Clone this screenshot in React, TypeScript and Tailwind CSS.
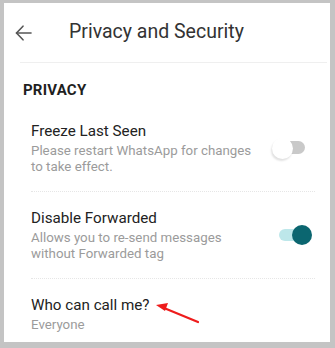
import React from 'react';

function Toggle({ on }: { on: boolean }) {
  return (
    <div className="relative w-[40px] h-[20px] shrink-0">
      {on ? (
        <>
          <div className="absolute left-[7px] top-[4px] w-[28px] h-[12px] rounded-full bg-[#bde7ea]" />
          <div className="absolute right-0 top-0 w-[20px] h-[20px] rounded-full bg-[#0b6670]" />
        </>
      ) : (
        <>
          <div className="absolute left-[6px] top-[3px] w-[27px] h-[13px] rounded-full bg-[#c9c9c9]" />
          <div className="absolute left-0 top-0 w-[21px] h-[21px] rounded-full bg-white shadow-[-1px_2px_2px_rgba(0,0,0,0.12)]" />
        </>
      )}
    </div>
  );
}

function Row({
  title,
  sub,
  toggle,
  divider = true,
}: {
  title: string;
  sub: string;
  toggle?: boolean;
  divider?: boolean;
}) {
  return (
    <div className={`ml-[27px] mr-[15px] flex items-center pt-[16px] pb-[16px] ${divider ? 'border-b border-dotted border-[#e6e6e6]' : ''}`}>
      <div className="w-[232px]">
        <div className="text-[15.2px] leading-[20px] text-[#222]">{title}</div>
        <div className="mt-[2px] text-[13.3px] leading-[16px] text-[#9b9b9b]">{sub}</div>
      </div>
      {toggle !== undefined && (
        <div className="ml-auto mr-[3px]">
          <Toggle on={toggle} />
        </div>
      )}
    </div>
  );
}

export default function App() {
  return (
    <div className="relative w-[335px] h-[348px] bg-[#c4c4c4] pt-[3px] pl-[4px] pr-[5px] pb-[6px]" style={{ fontFamily: 'Roboto, sans-serif' }}>
      <div className="h-full bg-white overflow-hidden">
        {/* Header */}
        <div className="h-[59px] flex items-center">
          <svg className="ml-[11px]" width="17" height="16" viewBox="0 0 17 16" fill="none" stroke="#555" strokeWidth="1.6" strokeLinecap="round" strokeLinejoin="round">
            <path d="M16 8H1.5" />
            <path d="M8 1.2L1.5 8l6.5 6.8" />
          </svg>
          <h1 className="ml-[37px] text-[19.5px] leading-[24px] text-[#333] mt-[-2px]">Privacy and Security</h1>
        </div>
        <div className="ml-[16px] mr-[3px] border-t border-[#efefef]" />

        <div className="ml-[19px] mt-[17px] text-[15px] leading-[20px] font-bold text-[#1f1f1f] tracking-[0.2px]">PRIVACY</div>

        <div className="mt-[5px]">
          <Row title="Freeze Last Seen" sub="Please restart WhatsApp for changes to take effect." toggle={false} />
          <Row title="Disable Forwarded" sub="Allows you to re-send messages without Forwarded tag" toggle={true} />
          <Row title="Who can call me?" sub="Everyone" divider={false} />
        </div>
      </div>

      {/* annotation arrow */}
      <svg className="absolute left-0 top-0 pointer-events-none" width="335" height="348">
        <line x1="198" y1="322" x2="164" y2="308" stroke="#ee1c1c" strokeWidth="2.2" strokeLinecap="round" />
        <path d="M156 305 L168 303 L165 311 Z" fill="#ee1c1c" />
      </svg>
    </div>
  );
}
